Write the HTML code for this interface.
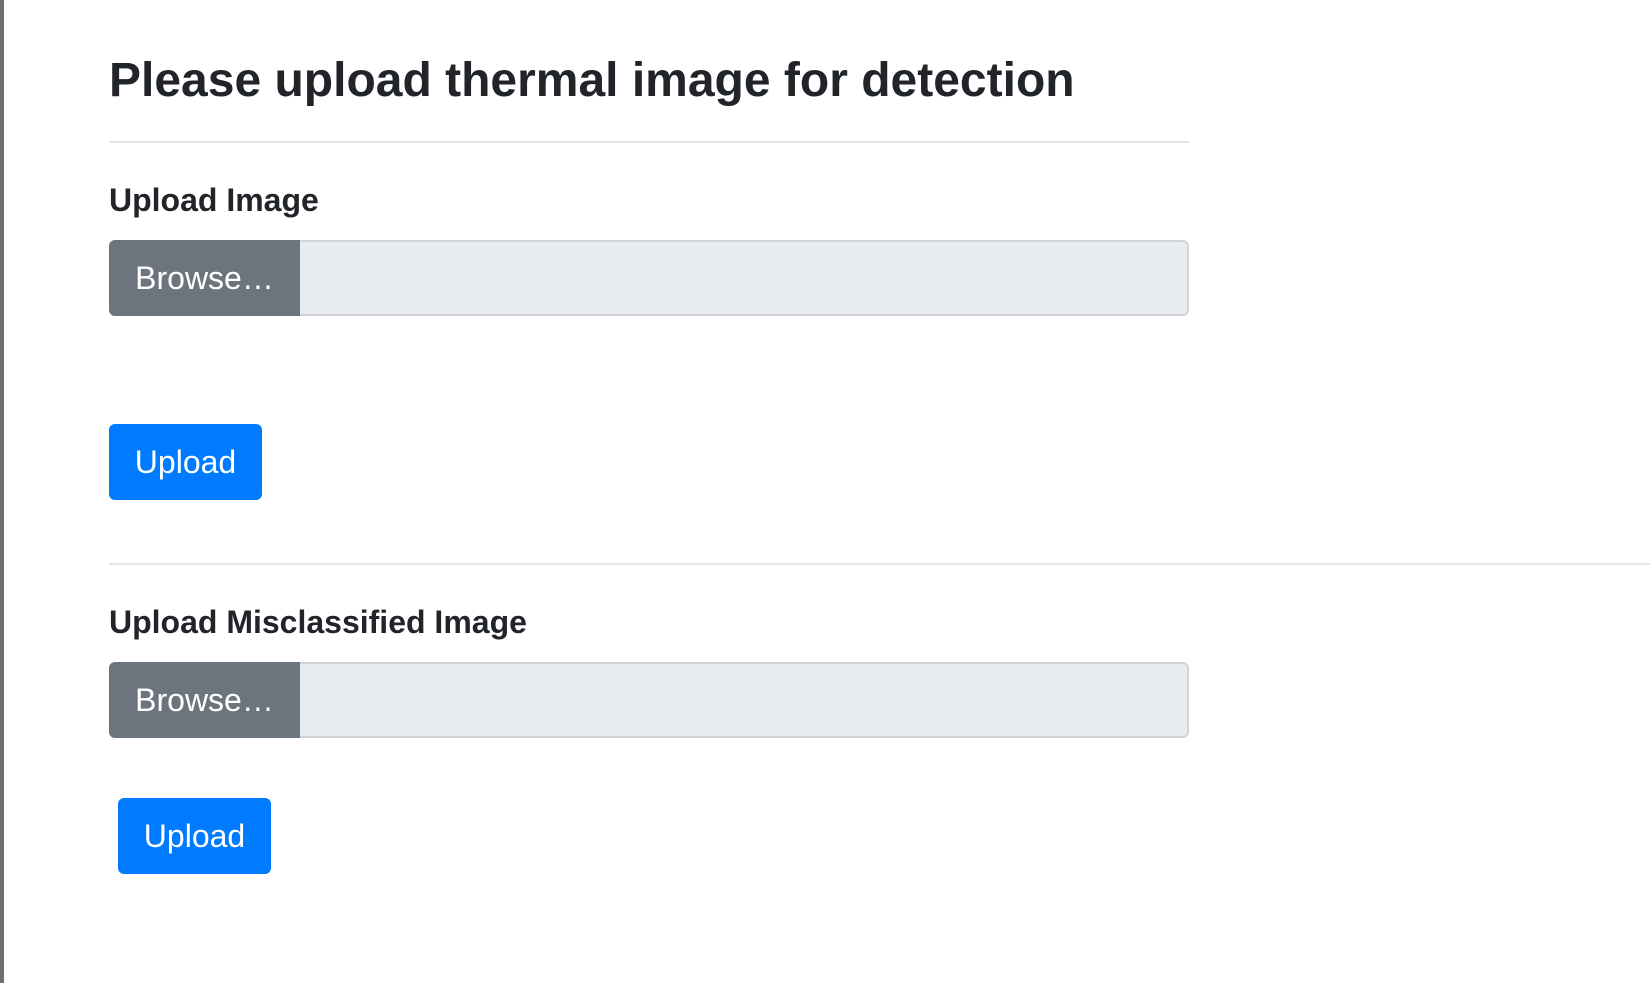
<!DOCTYPE html>
<html><head><meta charset="utf-8"><style>
*{box-sizing:border-box;margin:0;padding:0}
body{width:1650px;height:983px;background:#fff;font-family:"Liberation Sans",Arial,sans-serif;color:#212529;position:relative;overflow:hidden}
.bar{position:absolute;left:0;top:0;width:4px;height:983px;background:#6c6f73}
h1{position:absolute;left:109px;top:53px;font-size:48px;font-weight:bold;line-height:56px;white-space:nowrap}
h5{position:absolute;left:109px;font-size:32px;font-weight:bold;line-height:36px;white-space:nowrap}
.hr{position:absolute;left:109px;height:2px;background:#e3e4e5}
.br{position:absolute;left:109px;width:191px;height:76px;background:#6c757d;color:#fff;border-radius:6px 0 0 6px;font-size:32px;line-height:76px;text-align:center}
.in{position:absolute;left:300px;width:889px;height:76px;background:#e9ecef;border:2px solid #ced4da;border-left:none;border-radius:0 6px 6px 0}
.btn{position:absolute;width:153px;height:76px;background:#007bff;color:#fff;border-radius:6px;font-size:32px;line-height:76px;text-align:center}
</style></head><body>
<div class="bar"></div>
<h1>Please upload thermal image for detection</h1>
<div class="hr" style="top:141px;width:1080px"></div>
<h5 style="top:182px">Upload Image</h5>
<div class="br" style="top:240px">Browse…</div>
<div class="in" style="top:240px"></div>
<div class="btn" style="left:109px;top:424px">Upload</div>
<div class="hr" style="top:563px;width:1541px"></div>
<h5 style="top:604px">Upload Misclassified Image</h5>
<div class="br" style="top:662px">Browse…</div>
<div class="in" style="top:662px"></div>
<div class="btn" style="left:118px;top:798px">Upload</div>
</body></html>
